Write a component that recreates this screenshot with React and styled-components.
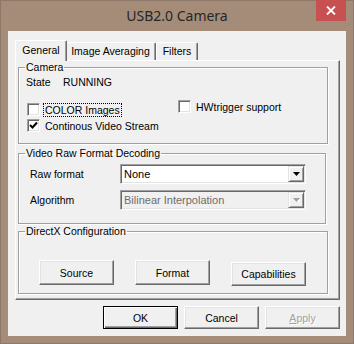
import React from "react";
import styled, { createGlobalStyle } from "styled-components";

const Global = createGlobalStyle`
  html, body { margin: 0; padding: 0; background: #a48c79; }
  body { font-family: "Liberation Sans", Arial, sans-serif; font-size: 10.5px; color: #000; }
`;

const Window = styled.div`
  width: 354px;
  height: 344px;
  box-sizing: border-box;
  background: #a48c79;
  border: 1px solid #8d786a;
  padding: 0 7px 7px;
  display: flex;
  flex-direction: column;
`;

const TitleBar = styled.div`
  height: 30px;
  display: grid;
  grid-template-columns: 1fr auto 1fr;
`;

const Title = styled.div`
  grid-column: 2;
  font-family: "Noto Sans", "Open Sans", sans-serif;
  font-size: 14px;
  line-height: 30px;
  color: #262626;
`;

const CloseButton = styled.div`
  grid-column: 3;
  justify-self: end;
  margin-top: -1px;
  width: 30px;
  height: 21px;
  background: #c75050;
  display: flex;
  align-items: center;
  justify-content: center;
`;

const Client = styled.div`
  flex: 1;
  background: #f0f0f0;
  padding: 9px 6px 0 7px;
  display: flex;
  flex-direction: column;
`;

const TabStrip = styled.div`
  display: flex;
  align-items: flex-end;
  height: 20px;
  padding-left: 2px;
  position: relative;
  z-index: 1;
`;

const Tab = styled.div`
  box-sizing: border-box;
  width: ${(p) => p.$w + (p.$active ? 4 : 0)}px;
  height: ${(p) => (p.$active ? 21 : 18)}px;
  margin: ${(p) => (p.$active ? "0 -2px -1px" : "0")};
  background: #f0f0f0;
  border-top: 1px solid #fff;
  border-left: 1px solid #fff;
  border-right: 1px solid #696969;
  border-radius: 2px 2px 0 0;
  box-shadow: inset -1px 0 0 #a0a0a0;
  display: flex;
  justify-content: center;
  padding-top: ${(p) => (p.$active ? 3 : 2)}px;
  line-height: 12px;
  position: relative;
  z-index: ${(p) => (p.$active ? 2 : 1)};
`;

const Panel = styled.div`
  box-sizing: border-box;
  width: 325px;
  height: 240px;
  border: 1px solid;
  border-color: #fff #696969 #696969 #fff;
  box-shadow: inset -1px -1px 0 #a0a0a0;
  padding: 0 0 0 2px;
  display: flex;
  flex-direction: column;
`;

const GroupBox = styled.fieldset`
  box-sizing: border-box;
  margin: ${(p) => p.$mt}px 0 0 0;
  padding: 0;
  min-width: 0;
  width: ${(p) => p.$w}px;
  height: ${(p) => p.$h}px;
  border: 1px solid #a0a0a0;
  box-shadow: inset 1px 1px 0 #fff, 1px 1px 0 #fff;
`;

const Legend = styled.legend`
  margin-left: 6px;
  padding: 0 1px;
  line-height: 12px;
`;

const CameraBody = styled.div`
  padding: 3px 0 0 7px;
  display: grid;
  grid-template-columns: 151px auto;
  align-items: start;
`;

const StateRow = styled.div`
  grid-column: 1 / 3;
  display: flex;
  line-height: 13px;
  margin-bottom: 11px;
`;

const StateLabel = styled.span`
  width: 37px;
`;

const CheckColumn = styled.div`
  display: flex;
  flex-direction: column;
  gap: 3px;
  padding-top: ${(p) => p.$pt || 0}px;
  padding-left: 1px;
`;

const CheckRow = styled.label`
  display: flex;
  align-items: center;
  height: 13px;
`;

const CheckBox = styled.span`
  box-sizing: border-box;
  width: 13px;
  height: 13px;
  background: #fff;
  border: 1px solid;
  border-color: #a0a0a0 #fff #fff #a0a0a0;
  box-shadow: inset 1px 1px 0 #696969, inset -1px -1px 0 #e3e3e3;
  display: flex;
  align-items: center;
  justify-content: center;
  flex: none;
`;

const CheckText = styled.span`
  margin-left: 3px;
  padding: 0 1px;
  line-height: 12px;
  border: 1px dotted ${(p) => (p.$focus ? "#000" : "transparent")};
`;

const FieldBody = styled.div`
  padding: ${(p) => p.$pad};
  display: flex;
  flex-direction: ${(p) => p.$dir || "row"};
  gap: ${(p) => p.$gap}px;
`;

const FormRow = styled.div`
  display: flex;
  align-items: center;
`;

const FieldLabel = styled.span`
  width: 90px;
`;

const Select = styled.div`
  box-sizing: border-box;
  width: 186px;
  height: 20px;
  border: 1px solid;
  border-color: #a0a0a0 #fff #fff #a0a0a0;
  box-shadow: inset 1px 1px 0 #696969, inset -1px -1px 0 #e3e3e3;
  background: ${(p) => (p.$disabled ? "#f0f0f0" : "#fff")};
  color: ${(p) => (p.$disabled ? "#6d6d6d" : "#000")};
  padding: 1px;
  display: flex;
  align-items: center;
`;

const SelectValue = styled.span`
  flex: 1;
  padding-left: 2px;
  font-size: 11px;
`;

const DropButton = styled.span`
  box-sizing: border-box;
  width: 16px;
  height: 16px;
  background: #f0f0f0;
  border: 1px solid;
  border-color: #e3e3e3 #696969 #696969 #e3e3e3;
  box-shadow: inset 1px 1px 0 #fff, inset -1px -1px 0 #a0a0a0;
  display: flex;
  align-items: center;
  justify-content: center;
`;

const Button = styled.div`
  box-sizing: border-box;
  width: 75px;
  height: ${(p) => p.$h}px;
  margin-top: ${(p) => p.$mt || 0}px;
  background: #f0f0f0;
  border: 1px solid;
  border-color: ${(p) => (p.$default ? "#000" : "#fff #696969 #696969 #fff")};
  box-shadow: ${(p) =>
    p.$default
      ? "inset 1px 1px 0 #fff, inset -1px -1px 0 #696969, inset -2px -2px 0 #a0a0a0"
      : "inset -1px -1px 0 #a0a0a0, inset 1px 1px 0 #e3e3e3"};
  display: flex;
  align-items: center;
  justify-content: center;
  color: ${(p) => (p.$disabled ? "#a0a0a0" : "#000")};
  text-shadow: ${(p) => (p.$disabled ? "1px 1px 0 #fff" : "none")};
`;

const Accel = styled.span`
  text-decoration: underline;
`;

const ButtonBar = styled.div`
  display: flex;
  justify-content: flex-end;
  gap: 6px;
  margin-top: 6px;
  width: 325px;
`;

const Arrow = ({ disabled }) => (
  <svg width="7" height="4" viewBox="0 0 7 4">
    {disabled && <path d="M1 1h7L4.5 5z" fill="#fff" />}
    <path d="M0 0h7L3.5 4z" fill={disabled ? "#a0a0a0" : "#000"} />
  </svg>
);

const Check = () => (
  <svg width="9" height="9" viewBox="0 0 9 9">
    <path d="M1 4 L3.5 6.5 L8 1.5" fill="none" stroke="#000" strokeWidth="2" />
  </svg>
);

export default function App() {
  return (
    <>
      <Global />
      <Window>
        <TitleBar>
          <Title>USB2.0 Camera</Title>
          <CloseButton>
            <svg width="10" height="9" viewBox="0 0 10 9">
              <path d="M1 0.5 L9 8.5 M9 0.5 L1 8.5" stroke="#fff" strokeWidth="1.8" />
            </svg>
          </CloseButton>
        </TitleBar>
        <Client>
          <TabStrip>
            <Tab $w={48} $active>General</Tab>
            <Tab $w={91}>Image Averaging</Tab>
            <Tab $w={42}>Filters</Tab>
          </TabStrip>
          <Panel>
            <GroupBox $mt={0} $w={310} $h={83}>
              <Legend>Camera</Legend>
              <CameraBody>
                <StateRow>
                  <StateLabel>State</StateLabel>
                  <span>RUNNING</span>
                </StateRow>
                <CheckColumn $pt={3}>
                  <CheckRow>
                    <CheckBox />
                    <CheckText $focus>COLOR Images</CheckText>
                  </CheckRow>
                  <CheckRow>
                    <CheckBox>
                      <Check />
                    </CheckBox>
                    <CheckText>Continous Video Stream</CheckText>
                  </CheckRow>
                </CheckColumn>
                <CheckColumn>
                  <CheckRow>
                    <CheckBox />
                    <CheckText>HWtrigger support</CheckText>
                  </CheckRow>
                </CheckColumn>
              </CameraBody>
            </GroupBox>
            <GroupBox $mt={3} $w={308} $h={77}>
              <Legend>Video Raw Format Decoding</Legend>
              <FieldBody $pad="5px 0 0 11px" $dir="column" $gap={6}>
                <FormRow>
                  <FieldLabel>Raw format</FieldLabel>
                  <Select>
                    <SelectValue>None</SelectValue>
                    <DropButton>
                      <Arrow />
                    </DropButton>
                  </Select>
                </FormRow>
                <FormRow>
                  <FieldLabel>Algorithm</FieldLabel>
                  <Select $disabled>
                    <SelectValue>Bilinear Interpolation</SelectValue>
                    <DropButton>
                      <Arrow disabled />
                    </DropButton>
                  </Select>
                </FormRow>
              </FieldBody>
            </GroupBox>
            <GroupBox $mt={1} $w={310} $h={69}>
              <Legend>DirectX Configuration</Legend>
              <FieldBody $pad="23px 0 0 20px" $gap={21}>
                <Button $h={25}>Source</Button>
                <Button $h={25}>Format</Button>
                <Button $h={24} $mt={2}>Capabilities</Button>
              </FieldBody>
            </GroupBox>
          </Panel>
          <ButtonBar>
            <Button $h={23} $default>OK</Button>
            <Button $h={23}>Cancel</Button>
            <Button $h={23} $disabled>
              <span>
                <Accel>A</Accel>pply
              </span>
            </Button>
          </ButtonBar>
        </Client>
      </Window>
    </>
  );
}
